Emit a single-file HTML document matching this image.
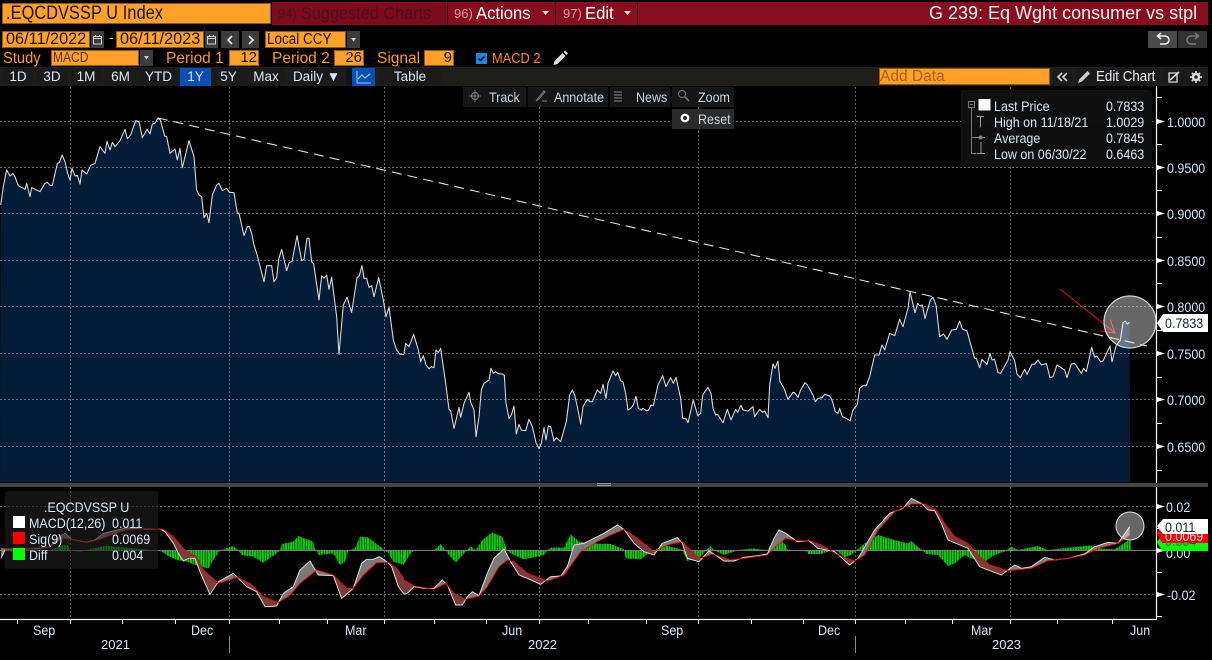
<!DOCTYPE html>
<html><head><meta charset="utf-8"><style>
html,body{margin:0;padding:0;background:#000;width:1212px;height:660px;overflow:hidden}
body{position:relative;font-family:"Liberation Sans",sans-serif}
.t{position:absolute;white-space:nowrap;color:#dbe9f7;font-size:13px;line-height:16px}
.n{font-size:14px;transform:scaleX(.893);transform-origin:0 50%}
.b{position:absolute}
.o{background:#ffa028;box-shadow:inset 0 0 0 1px #8f5a18}
.k{color:#1a1005}
.l{color:#ff9a1e;font-size:15.5px;line-height:18px}
.g{background:#3c3c3c}
.bt{position:absolute;top:68px;height:18px;background:#1b1b1b;text-align:center;color:#dbe9f7;font-size:13.5px;line-height:18px}
.tb{position:absolute;height:20px;background:#161616}
.ax{position:absolute;left:1167px;color:#cfe6ff;font-size:14px;line-height:14px;white-space:nowrap;transform:scaleX(.893);transform-origin:0 50%}
</style></head><body>

<svg class="b" style="left:0;top:0" width="1212" height="660" viewBox="0 0 1212 660" fill="none">
<defs>
<pattern id="st" patternUnits="userSpaceOnUse" width="7.7" height="10"><rect width="6.2" height="10" fill="#08cc08"/></pattern>
<clipPath id="c4" clipPathUnits="userSpaceOnUse"><rect x="490" y="0" width="165" height="540"/><rect x="700" y="0" width="140" height="540"/><rect x="1000" y="0" width="60" height="540"/><rect x="1160" y="0" width="60" height="540"/></clipPath>
<clipPath id="c5" clipPathUnits="userSpaceOnUse"><rect x="0" y="0" width="30" height="540"/><rect x="130" y="0" width="55" height="540"/><rect x="320" y="0" width="110" height="540"/><rect x="660" y="0" width="90" height="540"/><rect x="835" y="0" width="55" height="540"/><rect x="925" y="0" width="95" height="540"/></clipPath>
<clipPath id="c6" clipPathUnits="userSpaceOnUse"><rect x="0" y="0" width="140" height="540"/><rect x="350" y="0" width="240" height="540"/></clipPath>
</defs>

<!-- price fill -->
<g fill="#031c37">
<polygon transform="translate(0,100) scale(.33333)" points="0,1146 2,315 10,260 20,210 30,228 38,220 45,230 55,257 70,265 75,268 80,250 90,290 95,263 120,275 135,250 142,247 150,256 157,256 172,190 178,188 186,165 195,185 203,220 210,240 216,205 225,228 232,226 240,252 246,210 260,222 272,196 285,190 300,140 315,160 321,124 330,150 337,127 345,140 360,122 375,88 382,116 392,105 407,62 417,65 427,113 441,88 450,102 457,72 465,70 473,55 481,60 494,108 500,110 510,160 525,147 532,180 540,145 547,203 567,122 582,170 590,270 597,285 605,290 612,353 620,340 627,368 637,285 650,255 657,250 667,272 680,265 688,277 702,278 712,340 717,340 732,407 742,380 748,380 755,400 762,435 770,460 778,490 792,545 800,497 815,497 822,545 830,533 836,478 845,448 860,512 868,487 876,485 891,407 905,482 912,478 921,415 927,415 935,485 941,492 957,600 965,527 972,535 980,525 987,568 995,532 1010,650 1017,763 1030,615 1041,592 1055,637 1071,533 1078,527 1086,497 1092,535 1100,535 1107,562 1115,557 1122,590 1136,533 1150,600 1158,650 1167,622 1180,720 1190,750 1200,763 1212,763 1212,1146"/>
<polygon transform="translate(404,280) scale(.33333)" points="0,606 0,220 5,190 15,200 29,163 43,210 50,245 58,227 66,255 75,266 82,260 90,263 96,210 103,217 110,205 125,310 135,388 140,392 150,445 165,382 170,412 180,370 195,337 200,367 210,390 216,470 225,410 232,330 240,310 255,300 261,265 268,280 275,275 283,281 295,282 301,286 306,370 315,415 322,405 330,378 337,462 345,433 352,450 365,452 375,418 385,440 396,488 405,505 412,490 420,443 426,480 433,438 440,440 450,483 457,473 470,485 487,425 497,345 505,330 512,345 520,380 530,432 537,380 550,358 558,365 565,365 580,330 590,340 597,313 606,355 612,310 627,273 635,287 641,277 650,302 657,306 665,340 672,390 680,385 688,375 696,349 703,385 712,390 717,385 727,392 733,391 741,375 748,377 762,315 776,287 786,320 800,293 808,310 816,292 830,355 836,415 846,416 852,428 868,360 881,407 890,400 896,345 912,322 921,340 927,385 935,405 941,403 957,428 970,388 981,420 995,388 1001,397 1011,376 1017,390 1032,393 1047,380 1052,410 1067,388 1076,397 1082,393 1092,413 1097,315 1107,252 1113,265 1122,243 1128,305 1140,325 1152,358 1167,337 1172,338 1182,352 1190,330 1203,308 1212,317 1212,606"/>
<polygon transform="translate(808,270) scale(.33333)" points="0,636 0,348 15,375 22,395 30,385 42,383 50,373 65,378 72,390 82,425 90,430 95,415 103,440 115,445 126,453 135,420 148,403 155,355 165,347 175,347 185,320 200,255 213,255 222,225 230,240 245,190 260,197 275,148 285,170 300,115 306,65 321,128 329,100 335,107 343,105 351,145 367,90 375,82 384,105 395,200 407,192 417,208 431,180 445,178 455,153 463,177 477,183 500,265 505,265 515,293 522,268 537,283 546,250 552,270 560,268 570,308 578,310 600,270 606,245 620,272 627,312 637,323 650,298 657,313 672,282 680,283 690,270 700,285 715,280 726,323 735,320 747,285 770,300 777,323 790,282 800,280 820,310 827,295 835,305 851,232 860,262 866,258 878,275 885,273 906,228 912,275 925,225 937,210 945,158 952,153 958,162 965,157 966,636"/>
</g>

<!-- grid -->
<g stroke="#fff" stroke-opacity=".38" stroke-width="1" stroke-dasharray="2 2">
<path d="M0 121.5H1157M0 167.5H1157M0 213.5H1157M0 260.5H1157M0 306.5H1157M0 353.5H1157M0 399.5H1157M0 446.5H1157M0 506.5H1157M0 594.5H1157"/>
<path d="M70.5 87V482M229.5 87V482M384.5 87V482M539.5 87V482M698.5 87V482M855.5 87V482M1010.5 87V482M70.5 487V619M229.5 487V619M384.5 487V619M539.5 487V619M698.5 487V619M855.5 487V619M1010.5 487V619"/>
</g>

<!-- price line -->
<g stroke="#dcdcdc" stroke-width="3.2" stroke-linejoin="round" fill="none">
<polyline transform="translate(0,100) scale(.33333)" points="2,315 10,260 20,210 30,228 38,220 45,230 55,257 70,265 75,268 80,250 90,290 95,263 120,275 135,250 142,247 150,256 157,256 172,190 178,188 186,165 195,185 203,220 210,240 216,205 225,228 232,226 240,252 246,210 260,222 272,196 285,190 300,140 315,160 321,124 330,150 337,127 345,140 360,122 375,88 382,116 392,105 407,62 417,65 427,113 441,88 450,102 457,72 465,70 473,55 481,60 494,108 500,110 510,160 525,147 532,180 540,145 547,203 567,122 582,170 590,270 597,285 605,290 612,353 620,340 627,368 637,285 650,255 657,250 667,272 680,265 688,277 702,278 712,340 717,340 732,407 742,380 748,380 755,400 762,435 770,460 778,490 792,545 800,497 815,497 822,545 830,533 836,478 845,448 860,512 868,487 876,485 891,407 905,482 912,478 921,415 927,415 935,485 941,492 957,600 965,527 972,535 980,525 987,568 995,532 1010,650 1017,763 1030,615 1041,592 1055,637 1071,533 1078,527 1086,497 1092,535 1100,535 1107,562 1115,557 1122,590 1136,533 1150,600 1158,650 1167,622 1180,720 1190,750 1200,763 1212,763"/>
<polyline transform="translate(404,280) scale(.33333)" points="0,220 5,190 15,200 29,163 43,210 50,245 58,227 66,255 75,266 82,260 90,263 96,210 103,217 110,205 125,310 135,388 140,392 150,445 165,382 170,412 180,370 195,337 200,367 210,390 216,470 225,410 232,330 240,310 255,300 261,265 268,280 275,275 283,281 295,282 301,286 306,370 315,415 322,405 330,378 337,462 345,433 352,450 365,452 375,418 385,440 396,488 405,505 412,490 420,443 426,480 433,438 440,440 450,483 457,473 470,485 487,425 497,345 505,330 512,345 520,380 530,432 537,380 550,358 558,365 565,365 580,330 590,340 597,313 606,355 612,310 627,273 635,287 641,277 650,302 657,306 665,340 672,390 680,385 688,375 696,349 703,385 712,390 717,385 727,392 733,391 741,375 748,377 762,315 776,287 786,320 800,293 808,310 816,292 830,355 836,415 846,416 852,428 868,360 881,407 890,400 896,345 912,322 921,340 927,385 935,405 941,403 957,428 970,388 981,420 995,388 1001,397 1011,376 1017,390 1032,393 1047,380 1052,410 1067,388 1076,397 1082,393 1092,413 1097,315 1107,252 1113,265 1122,243 1128,305 1140,325 1152,358 1167,337 1172,338 1182,352 1190,330 1203,308 1212,317"/>
<polyline transform="translate(808,270) scale(.33333)" points="0,348 15,375 22,395 30,385 42,383 50,373 65,378 72,390 82,425 90,430 95,415 103,440 115,445 126,453 135,420 148,403 155,355 165,347 175,347 185,320 200,255 213,255 222,225 230,240 245,190 260,197 275,148 285,170 300,115 306,65 321,128 329,100 335,107 343,105 351,145 367,90 375,82 384,105 395,200 407,192 417,208 431,180 445,178 455,153 463,177 477,183 500,265 505,265 515,293 522,268 537,283 546,250 552,270 560,268 570,308 578,310 600,270 606,245 620,272 627,312 637,323 650,298 657,313 672,282 680,283 690,270 700,285 715,280 726,323 735,320 747,285 770,300 777,323 790,282 800,280 820,310 827,295 835,305 851,232 860,262 866,258 878,275 885,273 906,228 912,275 925,225 937,210 945,158 952,153 958,162 965,157"/>
</g>

<!-- trend line -->
<path d="M158 118L1147 346" stroke="#e0e0e0" stroke-width="1.1" stroke-dasharray="10 6"/>

<!-- red arrow + circle -->
<path d="M1060 289L1115 333M1110 319L1115 333L1100 331" stroke="#e01010" stroke-width="1.1"/>
<circle cx="1130" cy="322" r="26" fill="#fff" fill-opacity=".4" stroke="#d8d8d8" stroke-width="1.2"/>

<!-- divider -->
<rect x="0" y="483" width="1208" height="4" fill="#454545"/>
<path d="M597 483.5H611M597 485.5H611" stroke="#9a9a9a" stroke-width="1"/>

<!-- MACD bars -->
<g fill="url(#st)">
<polygon transform="translate(0,480) scale(.33333)" points="0,211 30,205 150,211 190,195 205,195 210,211 240,215 280,205 320,197 370,202 430,208 470,212 480,211 500,225 530,240 560,245 600,260 625,265 640,240 660,211 670,208 700,198 715,211 725,225 760,230 790,248 830,220 840,211 845,192 880,185 895,168 940,185 945,208 950,211 955,225 1000,220 1020,255 1035,245 1045,211 1065,205 1080,170 1105,172 1130,192 1148,205 1152,211 1165,218 1180,245 1212,255 1212,211"/>
<polygon transform="translate(404,480) scale(.33333)" points="0,252 20,220 30,211 90,211 110,192 125,211 135,225 155,248 185,215 190,211 200,198 215,211 235,180 265,158 295,170 307,205 310,211 320,220 360,238 420,225 430,211 440,203 480,203 500,163 525,185 560,190 620,192 660,208 665,235 710,238 740,215 750,211 780,195 830,208 835,211 850,243 890,230 905,211 920,198 930,211 960,225 990,215 1000,211 1045,205 1090,211 1115,168 1145,195 1150,208 1212,215 1212,211 0,211"/>
<polygon transform="translate(808,480) scale(.33333)" points="0,222 40,222 75,210 90,215 110,232 130,225 145,211 170,190 210,165 260,180 300,190 310,183 335,205 345,211 355,222 390,225 420,258 440,250 470,225 490,235 530,245 560,225 590,215 610,200 630,210 690,198 720,210 850,196 870,205 920,208 960,182 968,182 968,211 0,211"/>
</g>
<path d="M0 550.5H1157" stroke="#7c7c7c" stroke-width="1"/>

<!-- MACD band fills -->
<g transform="translate(0,480) scale(.33333)">
<polygon fill="#7a7a7a" points="3,235 15,210 60,205 120,205 150,200 180,170 195,160 215,178 260,187 285,180 310,160 340,153 380,143 440,147 480,147 495,155 520,190 535,220 550,243 565,235 585,235 600,275 615,310 630,343 655,305 700,280 720,300 740,320 770,335 795,380 830,378 850,340 880,320 900,270 930,243 955,285 1000,287 1025,355 1060,325 1085,250 1100,238 1120,238 1138,230 1160,245 1175,260 1195,320 1212,342 1212,295 1190,265 1165,247 1130,248 1090,285 1060,325 1040,325 1000,285 950,270 900,310 870,345 835,368 790,350 750,310 710,292 655,310 610,270 590,230 555,210 520,170 490,148 440,145 380,150 340,163 300,178 260,188 215,178 185,175 150,200 120,207 60,205 3,205"/>
<polygon fill="#7b3b3b" clip-path="url(#c4)" points="3,235 15,210 60,205 120,205 150,200 180,170 195,160 215,178 260,187 285,180 310,160 340,153 380,143 440,147 480,147 495,155 520,190 535,220 550,243 565,235 585,235 600,275 615,310 630,343 655,305 700,280 720,300 740,320 770,335 795,380 830,378 850,340 880,320 900,270 930,243 955,285 1000,287 1025,355 1060,325 1085,250 1100,238 1120,238 1138,230 1160,245 1175,260 1195,320 1212,342 1212,295 1190,265 1165,247 1130,248 1090,285 1060,325 1040,325 1000,285 950,270 900,310 870,345 835,368 790,350 750,310 710,292 655,310 610,270 590,230 555,210 520,170 490,148 440,145 380,150 340,163 300,178 260,188 215,178 185,175 150,200 120,207 60,205 3,205"/>
<polyline fill="none" stroke="#e4e4e4" stroke-width="2.8" points="3,235 15,210 60,205 120,205 150,200 180,170 195,160 215,178 260,187 285,180 310,160 340,153 380,143 440,147 480,147 495,155 520,190 535,220 550,243 565,235 585,235 600,275 615,310 630,343 655,305 700,280 720,300 740,320 770,335 795,380 830,378 850,340 880,320 900,270 930,243 955,285 1000,287 1025,355 1060,325 1085,250 1100,238 1120,238 1138,230 1160,245 1175,260 1195,320 1212,342"/>
<polyline fill="none" stroke="#f00" stroke-width="2.6" points="3,205 60,205 120,207 150,200 185,175 215,178 260,188 300,178 340,163 380,150 440,145 490,148 520,170 555,210 590,230 610,270 655,310 710,292 750,310 790,350 835,368 870,345 900,310 950,270 1000,285 1040,325 1060,325 1090,285 1130,248 1165,247 1190,265 1212,295"/>
</g>
<g transform="translate(404,480) scale(.33333)">
<polygon fill="#7a7a7a" points="0,342 10,340 30,320 60,325 90,325 115,300 130,315 155,375 175,375 190,350 205,335 225,347 250,280 270,235 300,207 320,245 345,285 370,295 410,313 440,290 470,288 490,260 510,195 540,190 560,180 600,160 640,135 660,148 690,190 720,215 750,225 775,190 820,173 835,190 850,235 885,245 915,212 960,243 990,243 1020,232 1060,227 1090,222 1110,175 1125,150 1145,160 1180,185 1212,182 1180,182 1145,175 1120,195 1090,225 1020,235 980,240 925,222 890,235 870,220 835,185 790,195 750,215 700,175 660,148 620,165 580,185 530,215 505,250 480,285 430,303 370,280 330,245 310,240 285,260 250,320 225,348 185,358 150,340 125,310 90,328 30,318 0,300"/>
<polygon fill="#7b3b3b" clip-path="url(#c5)" points="0,342 10,340 30,320 60,325 90,325 115,300 130,315 155,375 175,375 190,350 205,335 225,347 250,280 270,235 300,207 320,245 345,285 370,295 410,313 440,290 470,288 490,260 510,195 540,190 560,180 600,160 640,135 660,148 690,190 720,215 750,225 775,190 820,173 835,190 850,235 885,245 915,212 960,243 990,243 1020,232 1060,227 1090,222 1110,175 1125,150 1145,160 1180,185 1212,182 1180,182 1145,175 1120,195 1090,225 1020,235 980,240 925,222 890,235 870,220 835,185 790,195 750,215 700,175 660,148 620,165 580,185 530,215 505,250 480,285 430,303 370,280 330,245 310,240 285,260 250,320 225,348 185,358 150,340 125,310 90,328 30,318 0,300"/>
<polyline fill="none" stroke="#e4e4e4" stroke-width="2.8" points="0,342 10,340 30,320 60,325 90,325 115,300 130,315 155,375 175,375 190,350 205,335 225,347 250,280 270,235 300,207 320,245 345,285 370,295 410,313 440,290 470,288 490,260 510,195 540,190 560,180 600,160 640,135 660,148 690,190 720,215 750,225 775,190 820,173 835,190 850,235 885,245 915,212 960,243 990,243 1020,232 1060,227 1090,222 1110,175 1125,150 1145,160 1180,185 1212,182"/>
<polyline fill="none" stroke="#f00" stroke-width="2.6" points="0,300 30,318 90,328 125,310 150,340 185,358 225,348 250,320 285,260 310,240 330,245 370,280 430,303 480,285 505,250 530,215 580,185 620,165 660,148 700,175 750,215 790,195 835,185 870,220 890,235 925,222 980,240 1020,235 1090,225 1120,195 1145,175 1180,182 1212,182"/>
</g>
<g transform="translate(808,480) scale(.33333)">
<polygon fill="#7a7a7a" points="0,180 30,205 80,215 125,255 150,235 200,150 245,100 285,85 310,55 340,70 360,90 380,92 400,130 420,180 480,205 515,260 540,270 580,285 620,255 640,265 670,260 710,232 740,240 780,235 830,222 860,200 900,187 930,190 965,140 965,165 930,190 870,205 830,225 780,235 720,242 670,265 600,272 545,255 510,225 480,190 440,170 410,130 385,90 350,72 310,72 260,95 210,150 170,225 140,243 90,225 40,195"/>
<polygon fill="#7b3b3b" clip-path="url(#c6)" points="0,180 30,205 80,215 125,255 150,235 200,150 245,100 285,85 310,55 340,70 360,90 380,92 400,130 420,180 480,205 515,260 540,270 580,285 620,255 640,265 670,260 710,232 740,240 780,235 830,222 860,200 900,187 930,190 965,140 965,165 930,190 870,205 830,225 780,235 720,242 670,265 600,272 545,255 510,225 480,190 440,170 410,130 385,90 350,72 310,72 260,95 210,150 170,225 140,243 90,225 40,195"/>
<polyline fill="none" stroke="#e4e4e4" stroke-width="2.8" points="0,180 30,205 80,215 125,255 150,235 200,150 245,100 285,85 310,55 340,70 360,90 380,92 400,130 420,180 480,205 515,260 540,270 580,285 620,255 640,265 670,260 710,232 740,240 780,235 830,222 860,200 900,187 930,190 965,140"/>
<polyline fill="none" stroke="#f00" stroke-width="2.6" points="0,180 40,195 90,225 140,243 170,225 210,150 260,95 310,72 350,72 385,90 410,130 440,170 480,190 510,225 545,255 600,272 670,265 720,242 780,235 830,225 870,205 930,190 965,165"/>
</g>
<circle cx="1130" cy="526" r="14" fill="#fff" fill-opacity=".4" stroke="#e0e0e0" stroke-width="1"/>

<!-- axes -->
<path d="M1156.5 86V483M1156.5 487V619M0 619.5H1157" stroke="#f4f4f4" stroke-width="1.2"/>
<path d="M1157 97.5h5M1157 144.5h5M1157 190.5h5M1157 237.5h5M1157 283.5h5M1157 330.5h5M1157 377.5h5M1157 423.5h5M1157 470.5h5M1157 528.5h5M1157 572.5h5M1157 616.5h5" stroke="#f4f4f4"/>
<g fill="#f4f4f4">
<path d="M1157 119l8 2.500-8 2.500zM1157 165l8 2.500-8 2.500zM1157 211l8 2.500-8 2.500zM1157 258l8 2.500-8 2.500zM1157 304l8 2.500-8 2.500zM1157 351l8 2.500-8 2.500zM1157 397l8 2.500-8 2.500zM1157 444l8 2.500-8 2.500zM1157 504l8 2.500-8 2.500zM1157 548l8 2.500-8 2.500zM1157 592l8 2.500-8 2.500z"/>
</g>
<path d="M17.500 620v4M70.500 620v4M122.500 620v4M175.500 620v4M229.500 620v4M279.500 620v4M327.500 620v4M384.500 620v4M434.500 620v4M486.500 620v4M539.500 620v4M588.500 620v4M646.500 620v4M698.500 620v4M751.500 620v4M803.500 620v4M855.500 620v4M905.500 620v4M952.500 620v4M1010.500 620v4M1057.500 620v4M1112.500 620v4" stroke="#f4f4f4"/>
<path d="M229.500 636V653M855.500 636V653" stroke="#888"/>
</svg>

<!-- right axis labels -->
<div class="ax" style="top:115px">1.0000</div>
<div class="ax" style="top:161px">0.9500</div>
<div class="ax" style="top:207px">0.9000</div>
<div class="ax" style="top:254px">0.8500</div>
<div class="ax" style="top:300px">0.8000</div>
<div class="ax" style="top:347px">0.7500</div>
<div class="ax" style="top:393px">0.7000</div>
<div class="ax" style="top:440px">0.6500</div>
<div class="ax" style="top:500px;left:1166px">0.02</div>
<div class="ax" style="top:546px;left:1166px">0.00</div>
<div class="ax" style="top:588px;left:1167px">-0.02</div>

<!-- value tags -->
<svg class="b" style="left:1156px;top:312px" width="56" height="22"><polygon points="1,11 7,2 52,2 52,20 7,20" fill="#fff"/></svg>
<div class="t n" style="left:1165px;top:315px;color:#123">0.7833</div>
<svg class="b" style="left:1156px;top:516px" width="56" height="38"><polygon points="1,26 6,19 52,19 52,35 6,35" fill="#0f0"/></svg>
<div class="t n" style="left:1165px;top:533px;color:#063">0.004</div>
<svg class="b" style="left:1156px;top:516px" width="56" height="38"><polygon points="1,17 6,10 52,10 52,27 6,27" fill="#f00"/></svg>
<div class="t n" style="left:1165px;top:528px;color:#fde">0.0069</div>
<svg class="b" style="left:1156px;top:516px" width="56" height="38"><polygon points="1,10 7,3 52,3 52,18 7,18" fill="#fff"/></svg>
<div class="t n" style="left:1165px;top:519px;color:#123">0.011</div>

<!-- time labels -->
<div class="t n" style="left:33px;top:622px">Sep</div>
<div class="t n" style="left:191px;top:622px">Dec</div>
<div class="t n" style="left:345px;top:622px">Mar</div>
<div class="t n" style="left:502px;top:622px">Jun</div>
<div class="t n" style="left:661px;top:622px">Sep</div>
<div class="t n" style="left:818px;top:622px">Dec</div>
<div class="t n" style="left:971px;top:622px">Mar</div>
<div class="t n" style="left:1130px;top:622px">Jun</div>
<div class="t" style="left:101px;top:637px">2021</div>
<div class="t" style="left:528px;top:637px">2022</div>
<div class="t" style="left:992px;top:637px">2023</div>

<!-- top row -->
<div class="b o" style="left:2px;top:3px;width:269px;height:21px"></div>
<div class="t k" style="left:6px;top:3px;font-size:19px;line-height:21px;letter-spacing:.15px;transform:scaleX(.855);transform-origin:0 50%">.EQCDVSSP U Index</div>
<div class="b" style="left:272px;top:2px;width:936px;height:23px;background:#880e1f"></div>
<div class="b" style="left:272px;top:3px;width:175px;height:21px;background:#7a0c1c"></div>
<div class="b" style="left:447px;top:2px;width:1px;height:23px;background:#2a0208"></div>
<div class="b" style="left:555px;top:2px;width:1px;height:23px;background:#2a0208"></div>
<div class="b" style="left:637px;top:2px;width:1px;height:23px;background:#2a0208"></div>
<div class="t" style="left:278px;top:3px;font-size:13px;line-height:21px;color:#4d1020">94)</div>
<div class="t" style="left:301px;top:3px;font-size:17.500px;line-height:21px;color:#4d1020;transform:scaleX(.93);transform-origin:0 50%">Suggested Charts</div>
<div class="t" style="left:454px;top:3px;font-size:13px;line-height:21px;color:#d99aa2">96)</div>
<div class="t" style="left:476px;top:3px;font-size:17.500px;line-height:21px;color:#fff;transform:scaleX(.95);transform-origin:0 50%">Actions</div>
<div class="t" style="left:563px;top:3px;font-size:13px;line-height:21px;color:#d99aa2">97)</div>
<div class="t" style="left:585px;top:3px;font-size:17.500px;line-height:21px;color:#fff;transform:scaleX(.95);transform-origin:0 50%">Edit</div>
<svg class="b" style="left:0;top:0" width="660" height="30" fill="#ddd"><path d="M542 11h7l-3.500 4zM624 11h7l-3.500 4z"/></svg>
<div class="t" style="left:929px;top:3px;font-size:18px;line-height:21px;color:#f2f2f2">G 239: Eq Wght consumer vs stpl</div>

<!-- row 2 -->
<div class="b o" style="left:2px;top:31px;width:88px;height:17px"></div>
<div class="t k" style="left:6px;top:31px;font-size:16.300px;line-height:17px">06/11/2022</div>
<div class="b g" style="left:91px;top:31px;width:13px;height:17px"></div>
<div class="t" style="left:109px;top:30px;color:#ddd">-</div>
<div class="b o" style="left:116px;top:31px;width:88px;height:17px"></div>
<div class="t k" style="left:120px;top:31px;font-size:16.300px;line-height:17px">06/11/2023</div>
<div class="b g" style="left:205px;top:31px;width:13px;height:17px"></div>
<div class="b g" style="left:221px;top:31px;width:18px;height:17px"></div>
<div class="b g" style="left:242px;top:31px;width:17px;height:17px"></div>
<div class="b o" style="left:265px;top:31px;width:81px;height:17px"></div>
<div class="t k" style="left:267px;top:31px;font-size:15.500px;line-height:17px;transform:scaleX(.87);transform-origin:0 50%">Local CCY</div>
<div class="b g" style="left:347px;top:31px;width:13px;height:17px"></div>

<!-- row 3 -->
<div class="t l" style="left:3px;top:50px;transform:scaleX(.95);transform-origin:0 50%">Study</div>
<div class="b o" style="left:51px;top:50px;width:88px;height:16px"></div>
<div class="t" style="left:53px;top:50px;color:#5a3208;font-size:14.500px;transform:scaleX(.83);transform-origin:0 50%">MACD</div>
<div class="b g" style="left:140px;top:50px;width:13px;height:16px"></div>
<div class="t l" style="left:166px;top:50px">Period 1</div>
<div class="b o" style="left:229px;top:50px;width:30px;height:16px"></div>
<div class="t k" style="left:229px;width:28px;text-align:right;top:50px;font-size:15px">12</div>
<div class="t l" style="left:272px;top:50px">Period 2</div>
<div class="b o" style="left:334px;top:50px;width:30px;height:16px"></div>
<div class="t k" style="left:334px;width:28px;text-align:right;top:50px;font-size:15px">26</div>
<div class="t l" style="left:377px;top:50px">Signal</div>
<div class="b o" style="left:424px;top:50px;width:30px;height:16px"></div>
<div class="t k" style="left:424px;width:28px;text-align:right;top:50px;font-size:15px">9</div>
<div class="b" style="left:476px;top:53px;width:11px;height:11px;background:#1a86e8"></div>
<svg class="b" style="left:476px;top:53px" width="11" height="11" fill="none"><path d="M2.500 5.500l2 2 4-4" stroke="#061020" stroke-width="1.600"/></svg>
<div class="t" style="left:492px;top:51px;color:#ff8a10;font-size:15px;transform:scaleX(.855);transform-origin:0 50%">MACD 2</div>
<svg class="b" style="left:552px;top:50px" width="16" height="16"><path d="M1.500 15l1-4 8-8 3 3-8 8zM11.500 2l1.500-1.500 3 3-1.500 1.500z" fill="#ddd"/></svg>
<svg class="b" style="left:0;top:0" width="600" height="90" fill="none" stroke="#cfcfcf">
<path d="M93.500 36.500h8v7.500h-8zM93.500 38.500h8M95.500 35v2M99.500 35v2M207.500 36.500h8v7.500h-8zM207.500 38.500h8M209.500 35v2M213.500 35v2" stroke-width="1"/>
<path d="M232 36l-4 4 4 4M249 36l4 4-4 4" stroke="#fff" stroke-width="1.600"/>
<path d="M351 38h5l-2.500 3.500zM144 56h5l-2.500 3.500z" fill="#ccc" stroke="none"/>
</svg>

<!-- row 4 -->
<div class="b" style="left:0;top:67px;width:1208px;height:19px;background:#1f1e1b"></div>
<div class="bt" style="left:2px;width:32px">1D</div>
<div class="bt" style="left:36px;width:32px">3D</div>
<div class="bt" style="left:70px;width:32px">1M</div>
<div class="bt" style="left:104px;width:33px">6M</div>
<div class="bt" style="left:138px;width:41px">YTD</div>
<div class="bt" style="left:180px;width:31px;background:#0a50b4">1Y</div>
<div class="bt" style="left:212px;width:33px">5Y</div>
<div class="bt" style="left:246px;width:40px">Max</div>
<div class="bt" style="left:288px;width:57px">Daily ▼</div>
<div class="bt" style="left:346px;width:6px;background:#141414"></div>
<div class="bt" style="left:352px;width:23px;background:#0a50b4"></div>
<svg class="b" style="left:352px;top:68px" width="23" height="18" fill="none" stroke="#9cc4f4"><path d="M5 3v12h14" stroke-width="1"/><path d="M6 11l4-4 3 3 5-4" stroke-width="1.200"/></svg>
<div class="bt" style="left:379px;width:62px">Table</div>
<div class="b o" style="left:879px;top:68px;width:171px;height:17px"></div>
<div class="t" style="left:880px;top:68px;color:#a6640f;font-size:15.500px;line-height:17px">Add Data</div>
<div class="bt" style="left:1053px;width:19px"></div>
<div class="bt" style="left:1074px;width:86px"></div>
<div class="bt" style="left:1162px;width:23px"></div>
<div class="bt" style="left:1186px;width:21px"></div>
<div class="t" style="left:1096px;top:68px;font-size:15px;line-height:18px;color:#e8eef5;transform:scaleX(.89);transform-origin:0 50%">Edit Chart</div>
<svg class="b" style="left:1050px;top:68px" width="160" height="18" fill="none" stroke="#ddd">
<path d="M12 5l-4 4 4 4M17 5l-4 4 4 4" stroke-width="1.600"/>
<path d="M28 15l1.500-4 8-8 2.500 2.500-8 8z" fill="#ccc" stroke="none"/>
<path d="M119 5h8v9h-8z" stroke-width="1.300"/><path d="M120 12l9-8" stroke-width="1.600"/>
<circle cx="146" cy="9" r="3" stroke-width="2.500"/>
<path d="M146 3v2.500M146 12.500v2.500M140 9h2.500M149.500 9h2.500M141.800 4.800l1.800 1.800M148.400 11.400l1.800 1.800M150.200 4.800l-1.800 1.800M143.600 11.400l-1.800 1.800" stroke-width="1.600"/>
</svg>

<!-- undo/redo -->
<div class="b" style="left:1148px;top:31px;width:29px;height:17px;background:#4a4a4a"></div>
<div class="b" style="left:1178px;top:31px;width:29px;height:17px;background:#333"></div>
<svg class="b" style="left:1148px;top:31px" width="60" height="17" fill="none"><path d="M10 5h7a3.500 3.500 0 0 1 0 8h-5M13 2l-3.500 3 3.500 3" stroke="#eee" stroke-width="1.500"/><path d="M50 5h-7a3.500 3.500 0 0 0 0 8h5M47 2l3.500 3-3.500 3" stroke="#777" stroke-width="1.500"/></svg>

<!-- chart toolbar -->
<div class="tb" style="left:463px;top:87px;width:63px"></div>
<div class="tb" style="left:528px;top:87px;width:80px"></div>
<div class="tb" style="left:610px;top:87px;width:60px"></div>
<div class="tb" style="left:672px;top:87px;width:62px"></div>
<div class="tb" style="left:672px;top:109px;width:62px;background:#2b2b2b"></div>
<div class="t n" style="left:489px;top:89px;color:#c9d6e2">Track</div>
<div class="t n" style="left:554px;top:89px;color:#c9d6e2">Annotate</div>
<div class="t n" style="left:636px;top:89px;color:#c9d6e2">News</div>
<div class="t n" style="left:698px;top:89px;color:#c9d6e2">Zoom</div>
<div class="t n" style="left:698px;top:111px;color:#c9d6e2">Reset</div>
<svg class="b" style="left:460px;top:85px" width="280" height="46" fill="none" stroke="#777">
<circle cx="15" cy="11" r="3.500"/><path d="M15 5v12M9 11h12"/>
<path d="M76 16l2-3 6-7 1 1-6 7zM82 16h5"/>
<path d="M154 7h8M154 10h8M154 13h8M154 16h8" stroke="#888"/>
<circle cx="222" cy="9" r="3.500"/><path d="M225 12l4 4" stroke-width="1.500"/>
<circle cx="225" cy="33" r="3.200" stroke="#fff" stroke-width="2.400"/>
</svg>

<!-- price legend -->
<div class="b" style="left:961px;top:90px;width:191px;height:77px;background:rgba(16,16,16,.93);border-radius:3px"></div>
<svg class="b" style="left:961px;top:90px" width="40" height="77" fill="none" stroke="#777">
<path d="M7.500 11.500h6v6h-6zM9 14.500h3"/>
<path d="M10.500 18V63.500h5M10.500 47.500h5"/>
<path d="M16 26.500h7M19.500 26.500v11M14 47.500h10M16 63.500h8M20 52v11" stroke="#999"/>
<circle cx="19.500" cy="47.500" r="1.500" fill="#999"/>
<rect x="17.500" y="9" width="12" height="11.500" fill="#fff" stroke="none"/>
</svg>
<div class="t n" style="left:994px;top:98px">Last Price</div>
<div class="t n" style="left:994px;top:114px">High on 11/18/21</div>
<div class="t n" style="left:994px;top:130px">Average</div>
<div class="t n" style="left:994px;top:146px">Low on 06/30/22</div>
<div class="t n" style="left:1106px;top:98px">0.7833</div>
<div class="t n" style="left:1106px;top:114px">1.0029</div>
<div class="t n" style="left:1106px;top:130px">0.7845</div>
<div class="t n" style="left:1106px;top:146px">0.6463</div>

<!-- MACD legend -->
<div class="b" style="left:5px;top:491px;width:153px;height:78px;background:rgba(30,30,30,.62);border-radius:3px"></div>
<div class="b" style="left:13px;top:516px;width:12px;height:12px;background:#fff"></div>
<div class="b" style="left:13px;top:532px;width:12px;height:12px;background:#f00"></div>
<div class="b" style="left:13px;top:548px;width:12px;height:12px;background:#0f0"></div>
<div class="t n" style="left:44px;top:499px">.EQCDVSSP U</div>
<div class="t n" style="left:29px;top:515px">MACD(12,26)</div>
<div class="t n" style="left:29px;top:531px">Sig(9)</div>
<div class="t n" style="left:29px;top:547px">Diff</div>
<div class="t n" style="left:112px;top:515px">0.011</div>
<div class="t n" style="left:112px;top:531px">0.0069</div>
<div class="t n" style="left:112px;top:547px">0.004</div>
</body></html>
